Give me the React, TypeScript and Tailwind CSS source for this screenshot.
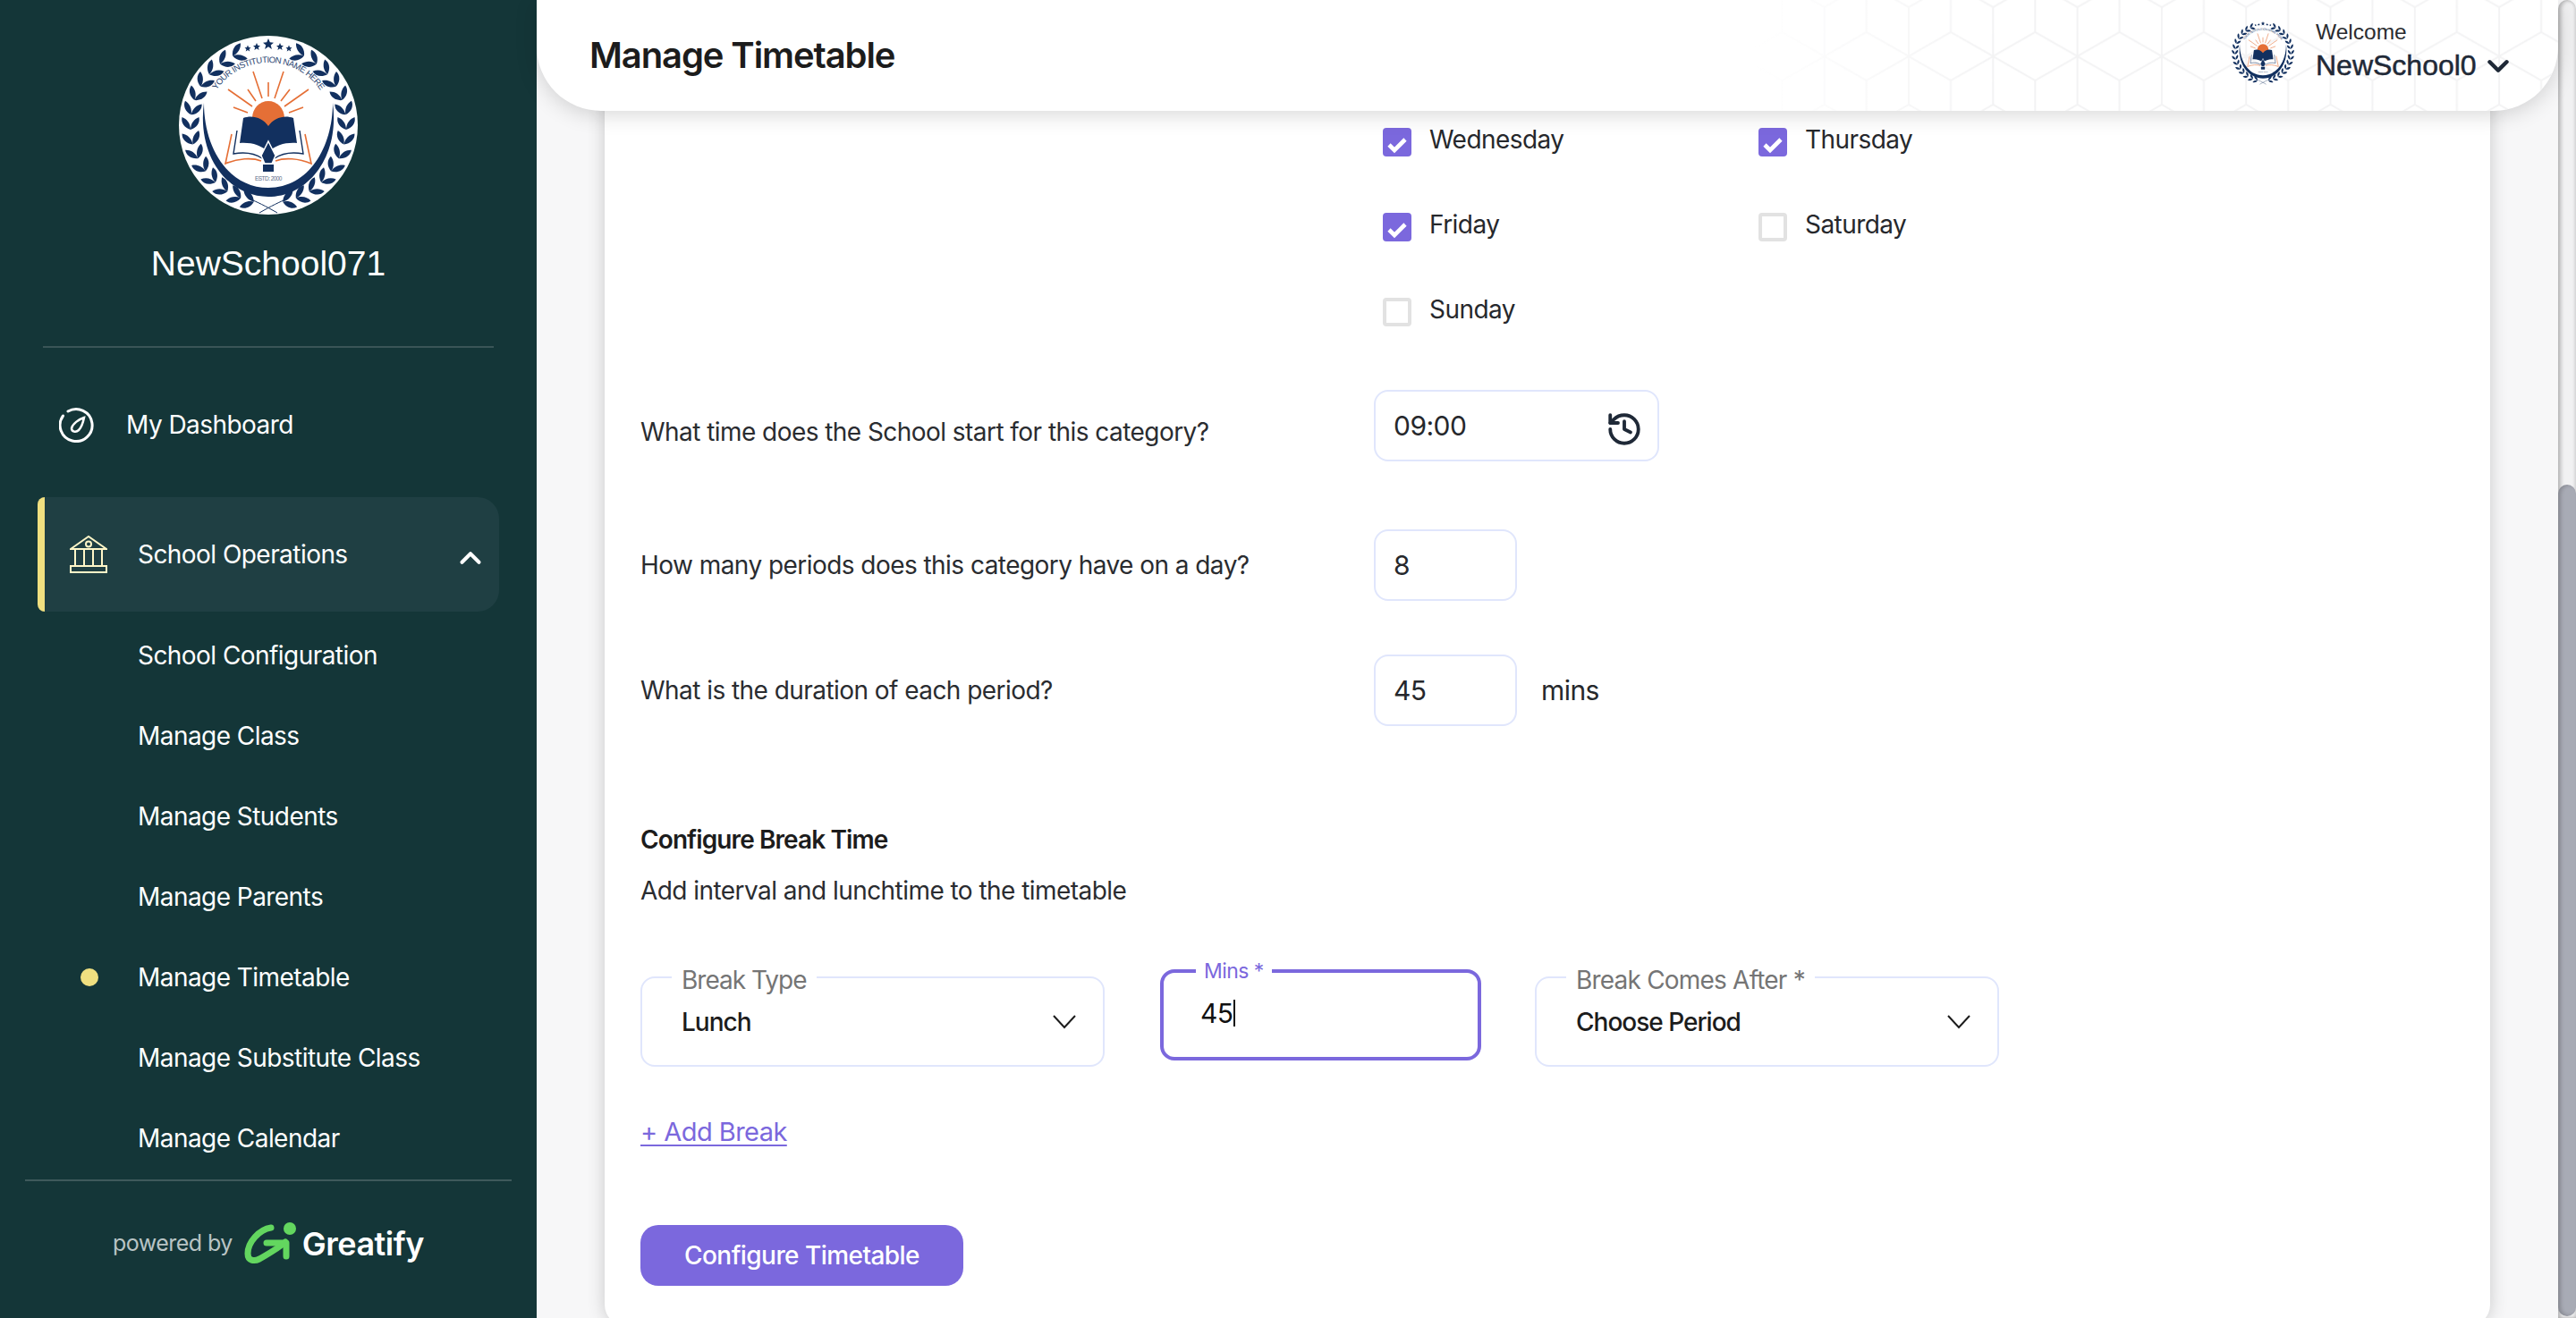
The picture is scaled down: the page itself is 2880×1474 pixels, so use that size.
import React from 'react';
import { ChevronDown, ChevronUp, History } from 'lucide-react';

const leafAngles = [-66, -55, -44, -33, -22, -11, 0, 11, 22, 33, 44, 55, 66, 76];

const stars = [
  [100, 9, 6],
  [87, 12, 4],
  [113, 12, 4],
  [77, 14, 3.5],
  [123, 14, 3.5],
];

const Laurel: React.FC = () => (
  <g fill="#12305f">
    {leafAngles.map((a) => (
      <g key={a} transform={`rotate(${a} 100 100) translate(187 100)`}>
        <path d="M0 5C0 -2 4 -7 9.5 -9C11 -3 7 3 0 5Z" />
        <path d="M0 5C0 -2 -4 -7 -9.5 -9C-11 -3 -7 3 0 5Z" />
      </g>
    ))}
  </g>
);

const SchoolLogo: React.FC<{ className?: string; ring?: boolean; id: string }> = ({ className, ring = true, id }) => (
  <svg viewBox="0 0 200 200" className={className}>
    {ring && <circle cx="100" cy="100" r="100" fill="#fff" />}
    <defs>
      <path id={id} d="M30 100A70 70 0 0 1 170 100" />
    </defs>
    <g fill="#12305f">
      {stars.map(([x, y, r], i) => (
        <path
          key={i}
          d={`M${x} ${y - r}L${x + r * 0.3} ${y - r * 0.3}L${x + r} ${y - r * 0.2}L${x + r * 0.45} ${y + r * 0.25}L${x + r * 0.65} ${y + r}L${x} ${y + r * 0.55}L${x - r * 0.65} ${y + r}L${x - r * 0.45} ${y + r * 0.25}L${x - r} ${y - r * 0.2}L${x - r * 0.3} ${y - r * 0.3}Z`}
        />
      ))}
      <path d="M28 75C20 135 55 180 100 180C145 180 180 135 172 75C172 125 145 170 100 170C55 170 28 125 28 75Z" />
    </g>
    <Laurel />
    <g transform="translate(200 0) scale(-1 1)">
      <Laurel />
    </g>
    <path d="M78 182C88 186 96 190 110 198M122 182C112 186 104 190 90 198" stroke="#12305f" strokeWidth="1" fill="none" />
    <text fontFamily="Liberation Sans, sans-serif" fontSize="9.6" fill="#2a4470" textAnchor="middle">
      <textPath href={`#${id}`} startOffset="50%">YOUR INSTITUTION NAME HERE</textPath>
    </text>
    <g stroke="#e56f36" strokeWidth="1.6" fill="none">
      <path d="M83 40L93 70M117 40L107 70M100 52V68M77 60L86 73M124 60L114 73M55 60L82 79M145 60L118 79M61 80L77 86M139 80L123 86" />
      <path d="M59 110L52 143C66 137 82 136 92 140M141 110L148 143C134 137 118 136 108 140" />
    </g>
    <path d="M82 92A18 19 0 0 1 118 92L100 104Z" fill="#e56f36" />
    <path d="M65 106L61 132C72 130 84 131 93 137M135 106L139 132C128 130 116 131 107 137" stroke="#12305f" strokeWidth="1.4" fill="none" />
    <path d="M72 92C82 88 94 92 100 101C106 92 118 88 128 92L132 120C120 119 108 122 100 130C92 122 80 119 68 120Z" fill="#12305f" />
    <path d="M100 118L108 134L104 143H96L92 134Z" fill="#12305f" stroke="#fff" strokeWidth="1.5" />
    <rect x="94" y="144" width="12" height="8" fill="#12305f" />
    <text x="100" y="162" textAnchor="middle" fontFamily="Liberation Sans, sans-serif" fontSize="6.5" fill="#5b6b88">ESTD: 2000</text>
  </svg>
);

const CheckBox: React.FC<{ label: string; checked?: boolean }> = ({ label, checked }) => (
  <div className="flex items-center gap-[20px] h-[32px]">
    {checked ? (
      <span className="w-[32px] h-[32px] rounded-[4px] bg-[#7b68dd] flex items-center justify-center">
        <svg viewBox="0 0 32 32" className="w-[32px] h-[32px]">
          <path d="M7 19L13 25L25 13" stroke="#fff" strokeWidth="4.6" fill="none" />
        </svg>
      </span>
    ) : (
      <span className="w-[32px] h-[32px] rounded-[4px] border-[4px] border-[#e2e2e2] bg-white" />
    )}
    <span className="text-[28px] leading-none text-[#26282c] -mt-[6px]">{label}</span>
  </div>
);

const BreakSelect: React.FC<{ label: string; value: string; legendClass: string }> = ({ label, value, legendClass }) => (
  <fieldset className="w-[519px] h-[115px] rounded-[16px] border-2 border-[#e0e6fc] pl-[44px] pr-[30px] flex items-center justify-between">
    <legend className={`-ml-[11px] px-[11px] pt-[6px] text-[28px] leading-[24px] text-[#757575] ${legendClass}`}>{label}</legend>
    <span className="text-[28px] font-medium tracking-[-1px] text-[#1c1c1c] -mt-[13px]">{value}</span>
    <svg viewBox="0 0 26 16" className="w-[26px] h-[16px] -mt-[13px]">
      <path d="M1 1L13 14L25 1" stroke="#1c1c1c" strokeWidth="2" fill="none" />
    </svg>
  </fieldset>
);

const FormRow: React.FC<{ label: string; className?: string; labelClass?: string; children: React.ReactNode }> = ({
  label,
  className,
  labelClass,
  children,
}) => (
  <div className={`flex items-center ${className ?? ''}`}>
    <label className={`w-[820px] text-[28px] text-[#2a2c30] ${labelClass ?? ''}`}>{label}</label>
    {children}
  </div>
);

const subMenu = [
  'School Configuration',
  'Manage Class',
  'Manage Students',
  'Manage Parents',
  'Manage Timetable',
  'Manage Substitute Class',
  'Manage Calendar',
];

const App: React.FC = () => {
  return (
    <div className="flex h-screen overflow-hidden bg-[#f7f7f8] font-['Inter',sans-serif] tracking-[-0.55px]">
      <aside className="w-[600px] shrink-0 bg-[#143638] flex flex-col text-white">
        <div className="pt-[40px] flex flex-col items-center">
          <SchoolLogo id="nameArcBig" className="w-[200px] h-[200px]" />
          <div className="mt-[32px] text-[39px] leading-[46px] tracking-normal font-['Liberation_Sans',sans-serif]">NewSchool071</div>
        </div>
        <div className="mx-[48px] mt-[69px] h-[2px] bg-[#3a5557]" />

        <div className="mt-[66px] pl-[66px] flex items-center gap-[35px] h-[40px]">
          <svg viewBox="0 0 40 40" className="w-[40px] h-[40px]" fill="none" stroke="#fff" strokeWidth="3">
            <path d="M10 5A18 18 0 1 1 4.5 10" strokeLinecap="round" />
            <path d="M28 12C22 14 15 19 14 24C14 28 19 29 22 26C25 23 27 17 28 12Z" strokeWidth="2.5" />
          </svg>
          <span className="text-[28px] leading-none">My Dashboard</span>
        </div>

        <div className="mt-[61px] mx-[42px] h-[128px] rounded-l-[8px] rounded-r-[24px] bg-[#1f3f43] border-l-[8px] border-[#f0e080] flex items-center pl-[28px] pr-[13px]">
          <svg viewBox="0 0 42 42" className="w-[42px] h-[42px]" fill="none" stroke="#fff7c8" strokeWidth="2">
            <path d="M1 15L21 1L41 15Z" />
            <circle cx="21" cy="9.5" r="3" />
            <path d="M6 15V34M16 15V34M26 15V34M36 15V34" />
            <rect x="1" y="34" width="40" height="7" />
          </svg>
          <span className="ml-[34px] text-[28px] leading-none flex-1">School Operations</span>
          <ChevronUp className="w-[38px] h-[38px] mt-[8px]" strokeWidth={2.6} />
        </div>

        <nav className="mt-[4px] flex flex-col">
          {subMenu.map((item) => (
            <div key={item} className="h-[90px] flex items-center pl-[90px]">
              <span className={`w-[20px] h-[20px] rounded-full ${item === 'Manage Timetable' ? 'bg-[#f0e080]' : ''}`} />
              <span className="ml-[44px] text-[28px] leading-none">{item}</span>
            </div>
          ))}
        </nav>

        <div className="mx-[28px] mt-auto h-[2px] bg-[#3f5a5c]" />
        <div className="h-[153px] pb-[14px] flex items-center justify-center">
          <span className="text-[25px] text-[#b9c4c5]">powered by</span>
          <svg viewBox="0 0 60 48" className="ml-[12px] w-[60px] h-[48px]" fill="none">
            <path d="M31 6C18 8 5 22 5 35C5 43 12 44 18 41C28 35 38 30 47 22" stroke="#63d65f" strokeWidth="7" strokeLinecap="round" />
            <path d="M26 23H48V38" stroke="#63d65f" strokeWidth="7" strokeLinecap="round" strokeLinejoin="round" />
            <circle cx="52" cy="7" r="7" fill="#63d65f" />
          </svg>
          <span className="ml-[6px] text-[36px] leading-none font-semibold tracking-[-0.5px]">Greatify</span>
        </div>
      </aside>

      <main className="relative flex-1 flex min-w-0">
        <div className="relative flex-1 min-w-0 px-[76px]">
          <header className="absolute top-0 left-0 right-0 z-10 h-[124px] rounded-b-[72px] bg-white shadow-[0_4px_24px_rgba(0,0,0,0.16)] overflow-hidden flex items-center pl-[59px] pr-[48px]">
            <svg className="absolute top-0 right-0 h-[124px] w-[900px]" fill="none">
              <defs>
                <pattern id="hexTile" width="94.3" height="163.5" patternUnits="userSpaceOnUse" x="79.7" y="-19.5">
                  <path
                    d="M0 27.5V136.5M94.3 27.5V136.5M47 0V55.5M47 109.5V163.5M0 82.5L47 55.5L94.3 82.5L47 109.5ZM0 27.5L47 0.5L94.3 27.5M0 136.5L47 163.5L94.3 136.5"
                    stroke="#f3f3f4"
                    strokeWidth="2"
                  />
                </pattern>
                <linearGradient id="hexFade" x1="0" x2="1" y1="0" y2="0">
                  <stop offset="0" stopColor="#000" />
                  <stop offset="0.3" stopColor="#fff" />
                </linearGradient>
                <mask id="hexMask">
                  <rect width="900" height="124" fill="url(#hexFade)" />
                </mask>
              </defs>
              <rect width="900" height="124" fill="url(#hexTile)" mask="url(#hexMask)" />
            </svg>
            <h1 className="relative text-[40px] font-semibold text-[#1c1c1c] tracking-[-1.1px] flex-1">Manage Timetable</h1>
            <SchoolLogo id="nameArcSmall" ring={false} className="relative w-[72px] h-[72px] -mt-[7px]" />
            <div className="relative ml-[23px] w-[180px] -mt-[11px] font-['Liberation_Sans',sans-serif] tracking-normal">
              <div className="text-[24.5px] leading-[30px] text-[#2a2c30]">Welcome</div>
              <div className="mt-[3px] text-[32px] leading-[38px] text-[#1f2937] whitespace-nowrap [-webkit-text-stroke:0.5px_#1f2937]">NewSchool0</div>
            </div>
            <ChevronDown className="relative w-[38px] h-[38px] mt-[24px] ml-[5px] text-[#1f2937]" strokeWidth={2.8} />
          </header>

          <div className="h-[1483px] bg-white rounded-[24px] shadow-[0_0_20px_rgba(0,0,0,0.19)] pl-[40px] pt-[143px]">
            <div className="ml-[830px] grid grid-cols-[420px_300px] gap-y-[63px] w-[720px]">
              <CheckBox label="Wednesday" checked />
              <CheckBox label="Thursday" checked />
              <CheckBox label="Friday" checked />
              <CheckBox label="Saturday" />
              <CheckBox label="Sunday" />
            </div>

            <FormRow label="What time does the School start for this category?" labelClass="pt-[14px]" className="mt-[71px]">
              <div className="w-[319px] h-[80px] rounded-[16px] border-2 border-[#e0e6fc] flex items-center justify-between pl-[20px] pr-[16px]">
                <span className="text-[30px] text-[#26282c]">09:00</span>
                <History className="w-[42px] h-[42px] mt-[8px] text-[#1f2937]" strokeWidth={2.2} />
              </div>
            </FormRow>

            <FormRow label="How many periods does this category have on a day?" className="mt-[76px]">
              <div className="w-[160px] h-[80px] rounded-[16px] border-2 border-[#e0e6fc] flex items-center pl-[20px] text-[30px] text-[#26282c]">8</div>
            </FormRow>

            <FormRow label="What is the duration of each period?" className="mt-[60px]">
              <div className="w-[160px] h-[80px] rounded-[16px] border-2 border-[#e0e6fc] flex items-center pl-[20px] text-[30px] text-[#26282c]">45</div>
              <span className="ml-[27px] text-[30px] text-[#26282c]">mins</span>
            </FormRow>

            <h2 className="mt-[110px] text-[28px] leading-[34px] font-semibold tracking-[-0.9px] text-[#1c1c1c]">Configure Break Time</h2>
            <p className="mt-[23px] text-[28px] leading-[34px] text-[#2a2c30]">Add interval and lunchtime to the timetable</p>

            <div className="mt-[65px] flex items-start">
              <BreakSelect label="Break Type" value="Lunch" legendClass="tracking-[-1px]" />
              <fieldset className="ml-[62px] w-[359px] h-[110px] -mt-[2px] rounded-[16px] border-[4px] border-[#7b68dd] px-[36px]">
                <legend className="px-[9px] text-[23px] leading-[20px] text-[#7b68dd]">Mins *</legend>
                <div className="ml-[5px] mt-[17px] flex items-center text-[30px] leading-[40px] text-[#111]">
                  45<span className="w-[2px] h-[30px] bg-[#111]" />
                </div>
              </fieldset>
              <div className="ml-[60px]">
                <BreakSelect label="Break Comes After *" value="Choose Period" legendClass="tracking-[-0.8px]" />
              </div>
            </div>

            <a className="mt-[55px] block w-fit text-[29px] leading-[36px] text-[#7b68dd] underline underline-offset-4">+ Add Break</a>

            <button className="mt-[86px] block w-[361px] h-[68px] rounded-[20px] bg-[#7b68dd] text-white text-[28px] font-medium">Configure Timetable</button>
          </div>
        </div>

        <div className="w-[20px] shrink-0 flex flex-col rounded-t-[10px] bg-[#f1f1f2] shadow-[inset_3px_0_4px_rgba(0,0,0,0.25),inset_-2px_0_3px_rgba(0,0,0,0.1)]">
          <div className="mt-[542px] mb-[2px] flex-1 rounded-[10px] bg-[#a8abb5] shadow-[inset_3px_0_4px_rgba(0,0,0,0.2)]" />
        </div>
      </main>
    </div>
  );
};

export default App;
